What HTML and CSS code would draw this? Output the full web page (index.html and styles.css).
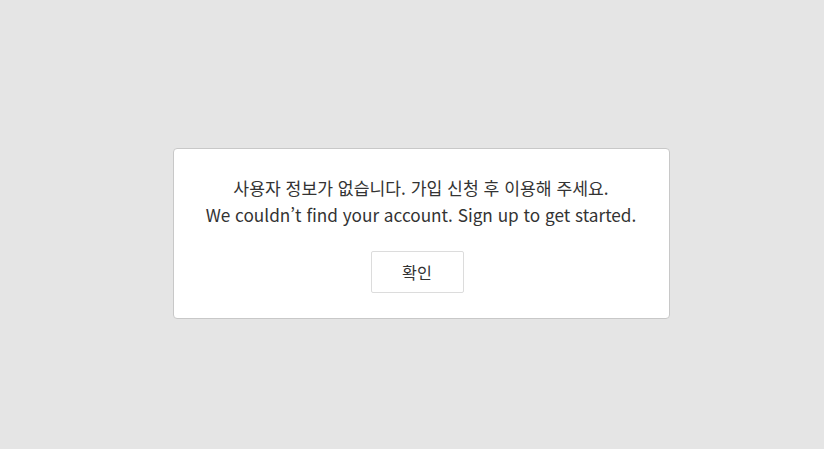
FILE: index.html
```html
<!DOCTYPE html>
<html lang="ko">
<head>
<meta charset="utf-8">
<link rel="stylesheet" href="styles.css">
</head>
<body>
<div class="screen">
  <div class="dialog">
    <p class="msg">사용자 정보가 없습니다. 가입 신청 후 이용해 주세요.<br>We couldn’t find your account. Sign up to get started.</p>
    <button class="ok" type="button">확인</button>
  </div>
</div>
</body>
</html>
```
FILE: styles.css
```css
html, body {
  background: #e5e5e5;
  overflow: hidden;
}
body {
  margin: 9px;
  font-family: "Noto Sans CJK KR", "Noto Sans", sans-serif;
  color: #333;
}
.screen {
  width: 100vw;
  height: 100vh;
  display: flex;
  align-items: center;
  justify-content: center;
}
.dialog {
  box-sizing: border-box;
  width: 497px;
  height: 171px;
  background: #fff;
  border: 1px solid #c8c8c8;
  border-radius: 4px;
  padding: 25px 20px 25px;
  display: flex;
  flex-direction: column;
  align-items: center;
}
.msg {
  margin: 0;
  font-size: 17.2px;
  line-height: 27px;
  text-align: center;
  color: #333;
}
.ok {
  margin-top: 23px;
  margin-right: 8px;
  box-sizing: border-box;
  width: 93px;
  height: 42px;
  background: #fff;
  border: 1px solid #dcdcdc;
  border-radius: 2px;
  font-family: "Noto Sans CJK KR", "Noto Sans", sans-serif;
  font-size: 16.2px;
  color: #333;
  padding: 0;
}
```
